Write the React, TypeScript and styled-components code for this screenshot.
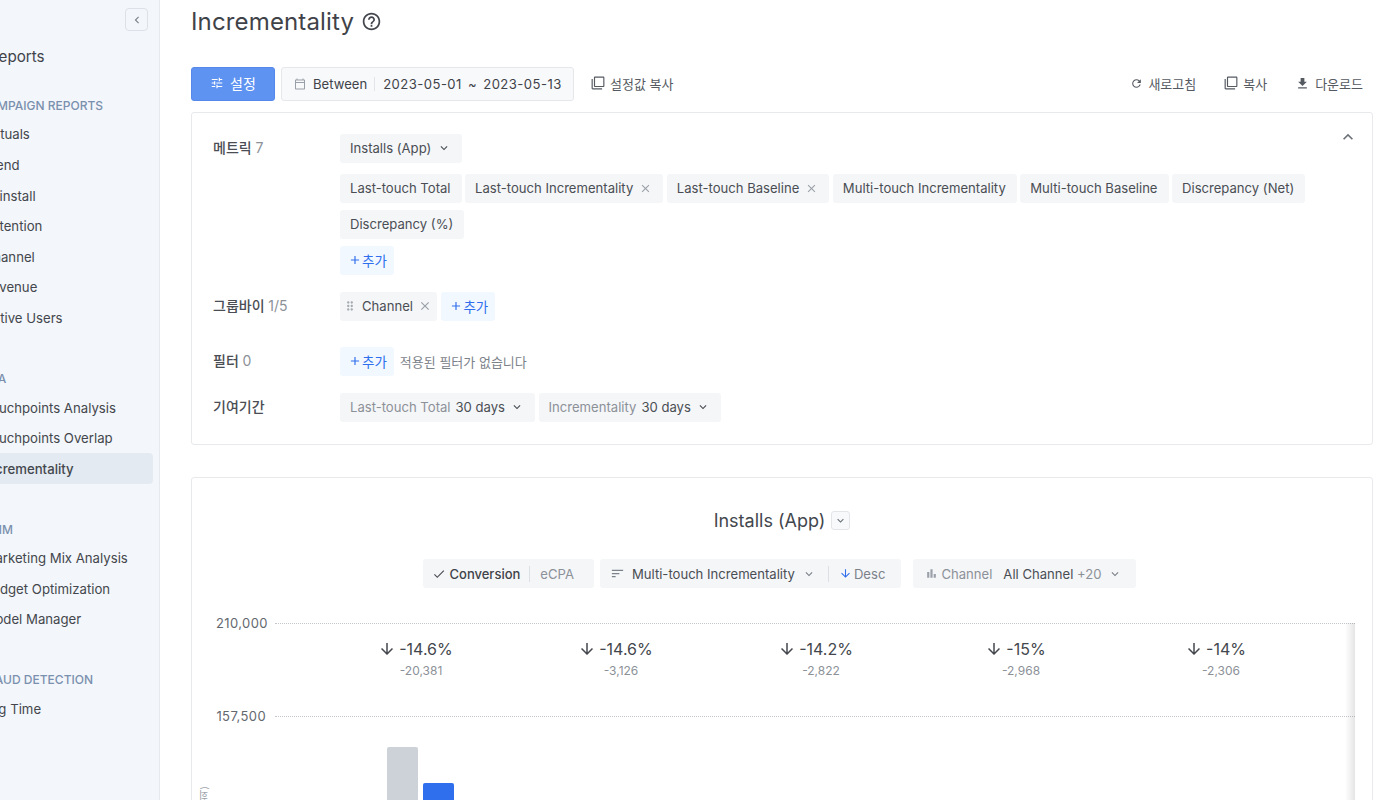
import styled, { createGlobalStyle } from "styled-components"
import {
    MdAdd,
    MdArrowDownward,
    MdBarChart,
    MdCheck,
    MdClose,
    MdDragIndicator,
    MdFileDownload,
    MdFilterNone,
    MdHelpOutline,
    MdKeyboardArrowDown,
    MdKeyboardArrowLeft,
    MdKeyboardArrowUp,
    MdOutlineCalendarToday,
    MdRefresh,
    MdSort,
    MdTune,
} from "react-icons/md"

const GlobalStyle = createGlobalStyle`
    html, body {
        margin: 0;
        height: 100%;
        overflow: hidden;
        background: #fff;
        color: #3f4349;
        font-family: Inter, "Noto Sans CJK KR", sans-serif;
        font-size: 13.1px;
    }
`

const navGroups = [
    { title: "CAMPAIGN REPORTS", items: ["Actuals", "Trend", "Reinstall", "Retention", "Channel", "Revenue", "Active Users"] },
    { title: "MTA", items: ["Touchpoints Analysis", "Touchpoints Overlap", "Incrementality"] },
    { title: "MMM", items: ["Marketing Mix Analysis", "Budget Optimization", "Model Manager"] },
    { title: "FRAUD DETECTION", items: ["Lag Time"] },
]

const metrics = [
    { label: "Last-touch Total" },
    { label: "Last-touch Incrementality", removable: true },
    { label: "Last-touch Baseline", removable: true },
    { label: "Multi-touch Incrementality" },
    { label: "Multi-touch Baseline" },
    { label: "Discrepancy (Net)" },
    { label: "Discrepancy (%)" },
]

const deltas = [
    { pct: "-14.6%", abs: "-20,381" },
    { pct: "-14.6%", abs: "-3,126" },
    { pct: "-14.2%", abs: "-2,822" },
    { pct: "-15%", abs: "-2,968" },
    { pct: "-14%", abs: "-2,306" },
]

function AddButton() {
    return (
        <Add>
            <MdAdd size={14} />
            추가
        </Add>
    )
}

export default function App() {
    return (
        <>
            <GlobalStyle />
            <Page>
                <Sidebar>
                    <CollapseRow>
                        <Collapse>
                            <MdKeyboardArrowLeft size={14} />
                        </Collapse>
                    </CollapseRow>
                    <SideTitle>Reports</SideTitle>
                    {navGroups.map((group) => (
                        <NavGroup key={group.title}>
                            <NavTitle>{group.title}</NavTitle>
                            {group.items.map((item) => (
                                <NavItem key={item} $active={item === "Incrementality"}>
                                    {item}
                                </NavItem>
                            ))}
                        </NavGroup>
                    ))}
                </Sidebar>

                <Main>
                    <TitleRow>
                        <Title>Incrementality</Title>
                        <MdHelpOutline size={21} />
                    </TitleRow>

                    <Toolbar>
                        <PrimaryButton>
                            <MdTune size={14} />
                            설정
                        </PrimaryButton>
                        <DateBox>
                            <MdOutlineCalendarToday size={12} color="#9aa0a8" />
                            <span>Between</span>
                            <DateDivider />
                            <DateText>2023-05-01 ~ 2023-05-13</DateText>
                        </DateBox>
                        <CopyLink>
                            <MdFilterNone size={14} />
                            설정값 복사
                        </CopyLink>
                        <ToolRight>
                            <ToolLink>
                                <MdRefresh size={13} />
                                새로고침
                            </ToolLink>
                            <ToolLink>
                                <MdFilterNone size={14} />
                                복사
                            </ToolLink>
                            <ToolLink>
                                <MdFileDownload size={15} />
                                다운로드
                            </ToolLink>
                        </ToolRight>
                    </Toolbar>

                    <SettingsCard>
                        <FoldIcon>
                            <MdKeyboardArrowUp size={20} />
                        </FoldIcon>
                        <SettingRow>
                            <SettingLabel>
                                메트릭 <Count>7</Count>
                            </SettingLabel>
                            <SettingBody>
                                <PrimaryLine>
                                    <Chip>
                                        Installs (App)
                                        <MdKeyboardArrowDown size={14} />
                                    </Chip>
                                </PrimaryLine>
                                <ChipLine>
                                    {metrics.map((m) => (
                                        <Chip key={m.label}>
                                            {m.label}
                                            {m.removable && <MdClose size={13} color="#9aa0a8" />}
                                        </Chip>
                                    ))}
                                </ChipLine>
                                <ChipLine>
                                    <AddButton />
                                </ChipLine>
                            </SettingBody>
                        </SettingRow>
                        <SettingRow $gap={26}>
                            <SettingLabel>
                                그룹바이 <Count>1/5</Count>
                            </SettingLabel>
                            <SettingBody>
                                <ChipLine>
                                    <DragChip>
                                        <MdDragIndicator size={14} color="#a6abb2" />
                                        Channel
                                        <MdClose size={14} color="#9aa0a8" />
                                    </DragChip>
                                    <AddButton />
                                </ChipLine>
                            </SettingBody>
                        </SettingRow>
                        <SettingRow>
                            <SettingLabel>
                                필터 <Count>0</Count>
                            </SettingLabel>
                            <SettingBody>
                                <ChipLine>
                                    <AddButton />
                                    <EmptyNote>적용된 필터가 없습니다</EmptyNote>
                                </ChipLine>
                            </SettingBody>
                        </SettingRow>
                        <SettingRow>
                            <SettingLabel>기여기간</SettingLabel>
                            <SettingBody>
                                <ChipLine>
                                    <WindowChip>
                                        <Muted>Last-touch Total</Muted>
                                        30 days
                                        <MdKeyboardArrowDown size={14} />
                                    </WindowChip>
                                    <WindowChip>
                                        <Muted>Incrementality</Muted>
                                        30 days
                                        <MdKeyboardArrowDown size={14} />
                                    </WindowChip>
                                </ChipLine>
                            </SettingBody>
                        </SettingRow>
                    </SettingsCard>

                    <ChartCard>
                        <ChartHeading>
                            Installs (App)
                            <HeadingSelect>
                                <MdKeyboardArrowDown size={13} />
                            </HeadingSelect>
                        </ChartHeading>
                        <ChartControls>
                            <MetricControl>
                                <MdCheck size={14} />
                                <strong>Conversion</strong>
                                <ControlDivider />
                                <Muted>eCPA</Muted>
                            </MetricControl>
                            <SortControl>
                                <MdSort size={15} color="#7c828a" />
                                Multi-touch Incrementality
                                <MdKeyboardArrowDown size={14} color="#7c828a" />
                                <ControlDivider />
                                <DescLabel>
                                    <MdArrowDownward size={13} color="#2f6fed" />
                                    Desc
                                </DescLabel>
                            </SortControl>
                            <ChannelControl>
                                <MdBarChart size={13} color="#9aa0a8" />
                                <ChannelName>Channel</ChannelName>
                                <span>
                                    All Channel <Muted>+20</Muted>
                                </span>
                                <MdKeyboardArrowDown size={14} color="#7c828a" />
                            </ChannelControl>
                        </ChartControls>

                        <Plot>
                            <GridRow>
                                <AxisValue>210,000</AxisValue>
                                <GridLine />
                            </GridRow>
                            <GridRow>
                                <AxisValue>157,500</AxisValue>
                                <GridLine />
                            </GridRow>
                            <DeltaRow>
                                {deltas.map((d) => (
                                    <Delta key={d.abs}>
                                        <DeltaPct>
                                            <MdArrowDownward size={18} />
                                            {d.pct}
                                        </DeltaPct>
                                        <DeltaAbs>{d.abs}</DeltaAbs>
                                    </Delta>
                                ))}
                            </DeltaRow>
                            <Bars>
                                <Bar $color="#cdd2d9" $height={60} />
                                <Bar $color="#2f6fed" $height={24} />
                            </Bars>
                            <AxisName>(회)</AxisName>
                            <ScrollShade />
                        </Plot>
                    </ChartCard>
                </Main>
            </Page>
        </>
    )
}

const Page = styled.div`
    display: flex;
    width: 1400px;
    height: 800px;
    overflow: hidden;
`

const Sidebar = styled.aside`
    width: 159px;
    flex-shrink: 0;
    height: 800px;
    overflow: hidden;
    background: #f3f6fa;
    border-right: 1px solid #e6e9ee;
`

const CollapseRow = styled.div`
    display: flex;
    justify-content: flex-end;
    padding: 8px 11px 0 0;
`

const Collapse = styled.button`
    width: 23px;
    height: 23px;
    padding: 0;
    display: flex;
    align-items: center;
    justify-content: center;
    background: #f3f6fa;
    border: 1px solid #dde1e7;
    border-radius: 4px;
    color: #7c828a;
`

const SideTitle = styled.div`
    margin: 14px 0 0 -11px;
    font-size: 15.2px;
    line-height: 24px;
    color: #3f4349;
    white-space: nowrap;
`

const NavGroup = styled.div`
    margin: 0 6px 0 -16.5px;
    padding-top: 27px;

    & + & {
        padding-top: 35.7px;
    }
`

const NavTitle = styled.div`
    margin: 0 0 3.2px -3.5px;
    font-size: 12px;
    line-height: 20px;
    font-weight: 500;
    color: #7a90ae;
    white-space: nowrap;
`

const NavItem = styled.div<{ $active?: boolean }>`
    height: 30.6px;
    display: flex;
    align-items: center;
    font-size: 13.2px;
    white-space: nowrap;
    color: #43474d;
    border-radius: 4px;
    font-weight: ${(p) => (p.$active ? 500 : 400)};
    background: ${(p) => (p.$active ? "#e4eaf1" : "transparent")};
`

const Main = styled.main`
    flex: 1;
    min-width: 0;
    padding: 0 27px 0 31px;
`

const TitleRow = styled.div`
    height: 43px;
    display: flex;
    align-items: center;
    gap: 7px;
    color: #43474d;
`

const Title = styled.h1`
    margin: 0;
    font-size: 24px;
    font-weight: 400;
    letter-spacing: 0.15px;
    color: #3f4349;
`

const Toolbar = styled.div`
    display: flex;
    align-items: center;
    gap: 6px;
    margin-top: 24px;
    height: 34px;
`

const PrimaryButton = styled.button`
    width: 84px;
    height: 34px;
    display: flex;
    align-items: center;
    justify-content: center;
    gap: 6px;
    padding: 0 0 2px;
    background: #5f93f2;
    border: 1px solid #5688ea;
    border-radius: 3px;
    color: #fff;
    font: inherit;
    font-size: 14px;
`

const DateBox = styled.div`
    width: 293px;
    height: 34px;
    box-sizing: border-box;
    display: flex;
    align-items: center;
    gap: 7px;
    padding: 0 0 1px 12px;
    background: #f8f9fb;
    border: 1px solid #e5e7eb;
    border-radius: 3px;
`

const DateDivider = styled.span`
    width: 1px;
    height: 14px;
    margin-right: 1px;
    background: #e3e5e9;
`

const DateText = styled.span`
    letter-spacing: 0.45px;
    word-spacing: 2px;
    white-space: nowrap;
`

const ToolLink = styled.div`
    display: flex;
    align-items: center;
    gap: 5px;
    padding-bottom: 2px;
    font-size: 13px;
    color: #555a61;
`

const CopyLink = styled(ToolLink)`
    margin-left: 11px;
`

const ToolRight = styled.div`
    margin-left: auto;
    padding-right: 10px;
    display: flex;
    align-items: center;
    gap: 28px;
`

const SettingsCard = styled.section`
    position: relative;
    box-sizing: border-box;
    height: 333px;
    margin-top: 11px;
    padding: 21px 21px 0;
    background: #fff;
    border: 1px solid #e7e9ed;
    border-radius: 3px;
`

const FoldIcon = styled.span`
    position: absolute;
    top: 14px;
    right: 14px;
    color: #6b7077;
`

const SettingRow = styled.div<{ $gap?: number }>`
    display: flex;
    margin-bottom: ${(p) => p.$gap ?? 17}px;
`

const SettingLabel = styled.div`
    width: 127px;
    flex-shrink: 0;
    line-height: 28px;
    font-size: 14px;
    font-weight: 500;
    color: #4a4e54;
`

const Count = styled.span`
    font-weight: 400;
    color: #8c9198;
`

const SettingBody = styled.div`
    display: flex;
    flex-direction: column;
    gap: 7px;
`

const PrimaryLine = styled.div`
    display: flex;
    margin-bottom: 4px;
`

const ChipLine = styled.div`
    display: flex;
    flex-wrap: wrap;
    align-items: center;
    gap: 7px 3.5px;
`

const Chip = styled.div`
    height: 29px;
    box-sizing: border-box;
    display: flex;
    align-items: center;
    gap: 6px;
    padding: 0 11px 1px 10px;
    background: #f5f6f8;
    border-radius: 3px;
    color: #4a4e54;
    white-space: nowrap;
`

const WindowChip = styled(Chip)`
    gap: 5px;
`

const DragChip = styled(Chip)`
    gap: 5px;
    margin-right: 1px;
    padding: 0 5px 1px 3px;
`

const Add = styled.div`
    height: 29px;
    box-sizing: border-box;
    display: flex;
    align-items: center;
    padding: 0 7px 2px 8px;
    background: #f2f8ff;
    border-radius: 3px;
    color: #2f6fed;
    font-size: 13.5px;
`

const EmptyNote = styled.span`
    margin: 0 0 1px 2.5px;
    font-size: 13px;
    color: #7c828a;
`

const Muted = styled.span`
    color: #8c9198;
`

const ChartCard = styled.section`
    box-sizing: border-box;
    height: 400px;
    margin-top: 32px;
    padding-top: 30px;
    background: #fff;
    border: 1px solid #e7e9ed;
    border-radius: 3px;
`

const ChartHeading = styled.div`
    height: 24px;
    display: flex;
    align-items: center;
    justify-content: center;
    gap: 6px;
    font-size: 18px;
    color: #43474d;
`

const HeadingSelect = styled.span`
    width: 17px;
    height: 17px;
    display: flex;
    align-items: center;
    justify-content: center;
    border: 1px solid #e3e5e9;
    border-radius: 3px;
    background: #f8f9fb;
    color: #6b7077;
`

const ChartControls = styled.div`
    display: flex;
    justify-content: center;
    gap: 6px;
    margin-top: 27px;
    padding-right: 6px;
`

const Control = styled.div`
    height: 29px;
    box-sizing: border-box;
    display: flex;
    align-items: center;
    gap: 6px;
    background: #f5f6f8;
    border-radius: 3px;
    color: #4a4e54;
    white-space: nowrap;

    strong {
        font-size: 13px;
        font-weight: 500;
        color: #3f4349;
    }
`

const MetricControl = styled(Control)`
    gap: 4px;
    padding: 0 20px 0 9px;
`

const SortControl = styled(Control)`
    gap: 7px;
    padding: 0 16px 0 10px;
`

const ChannelControl = styled(Control)`
    margin-left: 6px;
    padding: 0 14px 0 12px;
`

const ChannelName = styled(Muted)`
    margin: 0 5px 0 -3px;
`

const ControlDivider = styled.span`
    width: 1px;
    height: 16px;
    margin: 0 6px 0 5px;
    background: #dcdfe4;

    ${SortControl} & {
        margin: 0 3px 0 5px;
    }
`

const DescLabel = styled.span`
    display: flex;
    align-items: center;
    gap: 2px;
    color: #7c828a;
`

const Plot = styled.div`
    position: relative;
    margin-top: 35px;
    padding-left: 24px;
`

const GridRow = styled.div`
    height: 93px;
    display: flex;
    align-items: flex-start;
`

const AxisValue = styled.span`
    width: 50px;
    margin-top: -9px;
    text-align: right;
    font-size: 13px;
    line-height: 18px;
    letter-spacing: 0.4px;
    color: #63686f;
`

const GridLine = styled.div`
    width: 1080px;
    margin-left: 9px;
    border-top: 1px dotted #c4c7cc;
`

const DeltaRow = styled.div`
    position: absolute;
    top: 15px;
    left: 129px;
    display: grid;
    grid-template-columns: repeat(5, 200px);
`

const Delta = styled.div`
    display: flex;
    flex-direction: column;
    align-items: center;
`

const DeltaPct = styled.div`
    display: flex;
    align-items: center;
    gap: 3px;
    margin-right: 11px;
    font-size: 16px;
    line-height: 22px;
    color: #43474d;
`

const DeltaAbs = styled.div`
    margin-top: 2px;
    font-size: 12px;
    line-height: 18px;
    color: #8c9198;
`

const Bars = styled.div`
    position: absolute;
    top: 124px;
    left: 195px;
    height: 60px;
    display: flex;
    align-items: flex-end;
    gap: 5px;
`

const Bar = styled.div<{ $color: string; $height: number }>`
    width: 31px;
    height: ${(p) => p.$height}px;
    background: ${(p) => p.$color};
    border-radius: 2px 2px 0 0;
`

const AxisName = styled.span`
    position: absolute;
    top: 163px;
    left: 4px;
    writing-mode: vertical-rl;
    transform: rotate(180deg);
    font-size: 10px;
    color: #9aa0a8;
`

const ScrollShade = styled.div`
    position: absolute;
    top: 0;
    right: 17px;
    width: 10px;
    height: 200px;
    background: linear-gradient(to right, rgba(0, 0, 0, 0), rgba(0, 0, 0, 0.1));
`
